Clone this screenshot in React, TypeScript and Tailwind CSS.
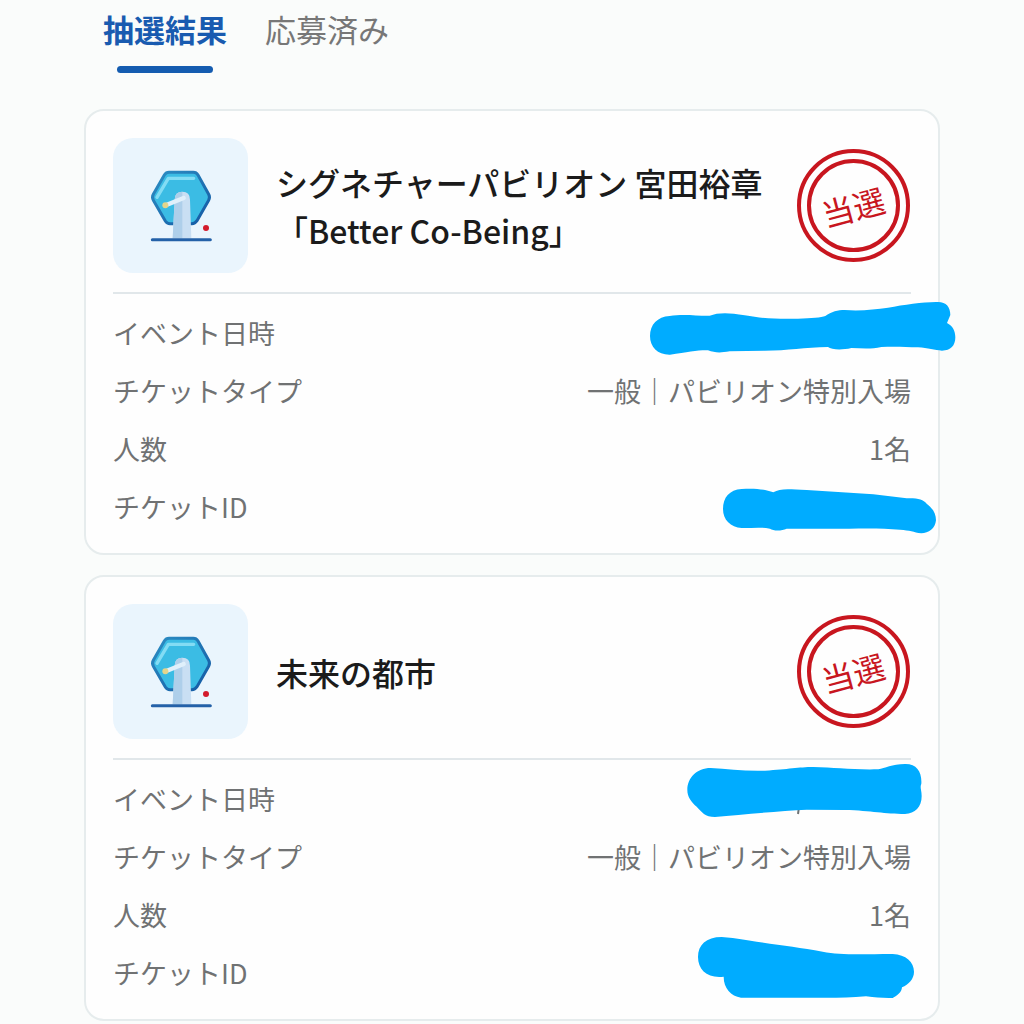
import { useState } from 'react';

interface Marker {
  viewBox: string;
  path: string;
  speck?: string;
  className: string;
}

interface Ticket {
  title: string[];
  type: string;
  count: string;
  date: Marker;
  id: Marker;
}

const tabs = ['抽選結果', '応募済み'];

const tickets: Ticket[] = [
  {
    title: ['シグネチャーパビリオン 宮田裕章', '「Better Co-Being」'],
    type: '一般｜パビリオン特別入場',
    count: '1名',
    date: {
      viewBox: '0 0 930 174',
      path: 'M6 108C6 74 28 50 65 48C105 41 150 48 185 47C210 38 240 37 290 46C350 57 400 57 450 56C490 55 520 53 532 48C550 35 570 30 590 30C640 34 680 28 720 23C770 14 830 5 870 6C895 6 907 22 907 45L897 69C914 78 922 92 922 112C922 137 908 152 882 152C860 150 840 144 810 142C770 140 730 139 700 141C670 148 640 145 610 144C580 151 550 149 540 141C470 142 420 152 350 152L245 154C215 159 200 158 180 151C150 150 120 157 66 164C30 165 6 142 6 108Z',
      className: 'absolute -top-[13px] -right-[47px] w-[310px] max-w-none',
    },
    id: {
      viewBox: '0 0 654 150',
      path: 'M9 69C9 35 28 11 65 9C100 6 135 9 160 19C180 6 205 9 260 12L460 25L560 37C595 36 609 41 620 53C637 67 648 80 648 103C646 127 626 142 604 142C580 138 570 133 540 131C480 125 410 128 330 128L200 128C185 135 160 135 150 128C120 122 90 127 65 126C32 124 9 102 9 69Z',
      className: 'absolute -top-[1px] -right-[27px] w-[218px] max-w-none',
    },
  },
  {
    title: ['未来の都市'],
    type: '一般｜パビリオン特別入場',
    count: '1名',
    date: {
      viewBox: '0 0 720 174',
      path: 'M7 84C7 48 35 18 77 18C130 21 180 28 240 26C310 22 340 15 385 15C450 16 500 24 580 22C600 18 620 7 660 6C695 5 711 30 709 65C704 78 710 82 710 102C710 135 690 155 660 156C600 156 560 146 480 144L365 143C280 147 170 158 90 165C60 165 50 150 35 134C18 120 7 104 7 84Z',
      speck: 'M341 142L339 156',
      className: 'absolute -top-[17px] -right-[14px] w-[240px] max-w-none',
    },
    id: {
      viewBox: '0 0 660 198',
      path: 'M6 69C6 33 30 9 77 9L110 12C220 30 290 37 380 53C430 63 480 61 590 60C630 62 654 84 654 113C654 135 638 151 618 160C617 175 604 185 590 192C560 193 540 190 510 187C450 192 400 192 330 191L135 191C105 186 83 163 83 128C35 134 6 108 6 69Z',
      className: 'absolute -top-[19px] -right-[5px] w-[220px] max-w-none',
    },
  },
];

function HiddenValue({ marker }: { marker: Marker }) {
  return (
    <svg viewBox={marker.viewBox} className={marker.className} aria-hidden="true">
      {marker.speck && <path d={marker.speck} stroke="#707273" strokeWidth="6" />}
      <path d={marker.path} fill="#00acff" />
    </svg>
  );
}

function LotteryIcon() {
  return (
    <svg
      viewBox="24 24 405 405"
      className="size-[135px] shrink-0 rounded-[20px] bg-[#eaf5fd]"
      aria-hidden="true"
    >
      <defs>
        <linearGradient id="edge" x1="0" y1="0" x2="1" y2="1">
          <stop offset="0" stopColor="#2d8fc4" />
          <stop offset="1" stopColor="#1459a4" />
        </linearGradient>
      </defs>
      <path
        d="M192 127H265Q274 127 279 135L311 193Q316 202 311 211L276 272Q270 281 261 281H195Q186 281 181 273L145 211Q140 202 145 193L178 135Q183 127 192 127Z"
        fill="#3bbce4"
        stroke="url(#edge)"
        strokeWidth="9"
      />
      <path d="M156 202L190 145H266" fill="none" stroke="#83dcf4" strokeWidth="10" strokeLinecap="round" strokeLinejoin="round" />
      <path d="M209 209Q209 185 232 185Q255 185 255 209L259 325H203Z" fill="#c9dff3" />
      <path d="M209 209Q209 185 232 185V325H203Z" fill="#aecfea" />
      <path d="M184 225L236 204" stroke="#e0f0fb" strokeWidth="13" strokeLinecap="round" />
      <circle cx="181" cy="226" r="9" fill="#e4d58b" />
      <path d="M142 329H316" stroke="#2461a8" strokeWidth="9" strokeLinecap="round" />
      <circle cx="303" cy="294" r="9" fill="#d31b2c" />
    </svg>
  );
}

function WinStamp() {
  return (
    <div className="mr-px flex size-[113px] shrink-0 rounded-full border-4 border-[#c8161f] p-1.5">
      <div className="flex flex-1 items-center justify-center rounded-full border-4 border-[#c8161f]">
        <span className="-rotate-15 text-[32px] leading-10 whitespace-nowrap text-[#c8161f]">当選</span>
      </div>
    </div>
  );
}

function TicketCard({ ticket }: { ticket: Ticket }) {
  return (
    <article className="rounded-[20px] border-2 border-[#e6eced] bg-[#fefefe] px-[27px] pt-[27px] pb-[26px]">
      <div className="flex items-center gap-7">
        <LotteryIcon />
        <h2 className="flex-1 text-[32px] leading-12 font-medium text-[#1b1b1b]">
          {ticket.title.map(line => (
            <span key={line} className="block whitespace-nowrap">{line}</span>
          ))}
        </h2>
        <WinStamp />
      </div>
      <dl className="mt-[19px] flex flex-col gap-[18px] border-t-2 border-[#e1e7ea] pt-[19px] text-[27px] leading-10 text-[#707273]">
        <div className="relative flex justify-between">
          <dt>イベント日時</dt>
          <dd><HiddenValue marker={ticket.date} /></dd>
        </div>
        <div className="flex justify-between">
          <dt>チケットタイプ</dt>
          <dd>{ticket.type}</dd>
        </div>
        <div className="flex justify-between">
          <dt>人数</dt>
          <dd>{ticket.count}</dd>
        </div>
        <div className="relative flex justify-between">
          <dt>チケットID</dt>
          <dd><HiddenValue marker={ticket.id} /></dd>
        </div>
      </dl>
    </article>
  );
}

export default function App() {
  const [active, setActive] = useState(0);

  return (
    <main className="min-h-screen bg-[#fafcfb] px-[84px] pt-[9px] font-['Noto_Sans_CJK_JP',sans-serif]">
      <div role="tablist" className="flex gap-[38px] pl-[19px]">
        {tabs.map((tab, i) => (
          <button
            key={tab}
            type="button"
            role="tab"
            aria-selected={active === i}
            onClick={() => setActive(i)}
            className={`flex flex-col items-center gap-[17px] text-[31px] leading-10 ${
              active === i ? 'font-bold text-[#195bb0]' : 'text-[#777777]'
            }`}
          >
            {tab}
            {active === i && <span className="h-[7px] w-24 rounded-full bg-[#145cb0]" />}
          </button>
        ))}
      </div>
      <div className="mt-9 flex flex-col gap-5">
        {tickets.map(ticket => (
          <TicketCard key={ticket.title[0]} ticket={ticket} />
        ))}
      </div>
    </main>
  );
}
